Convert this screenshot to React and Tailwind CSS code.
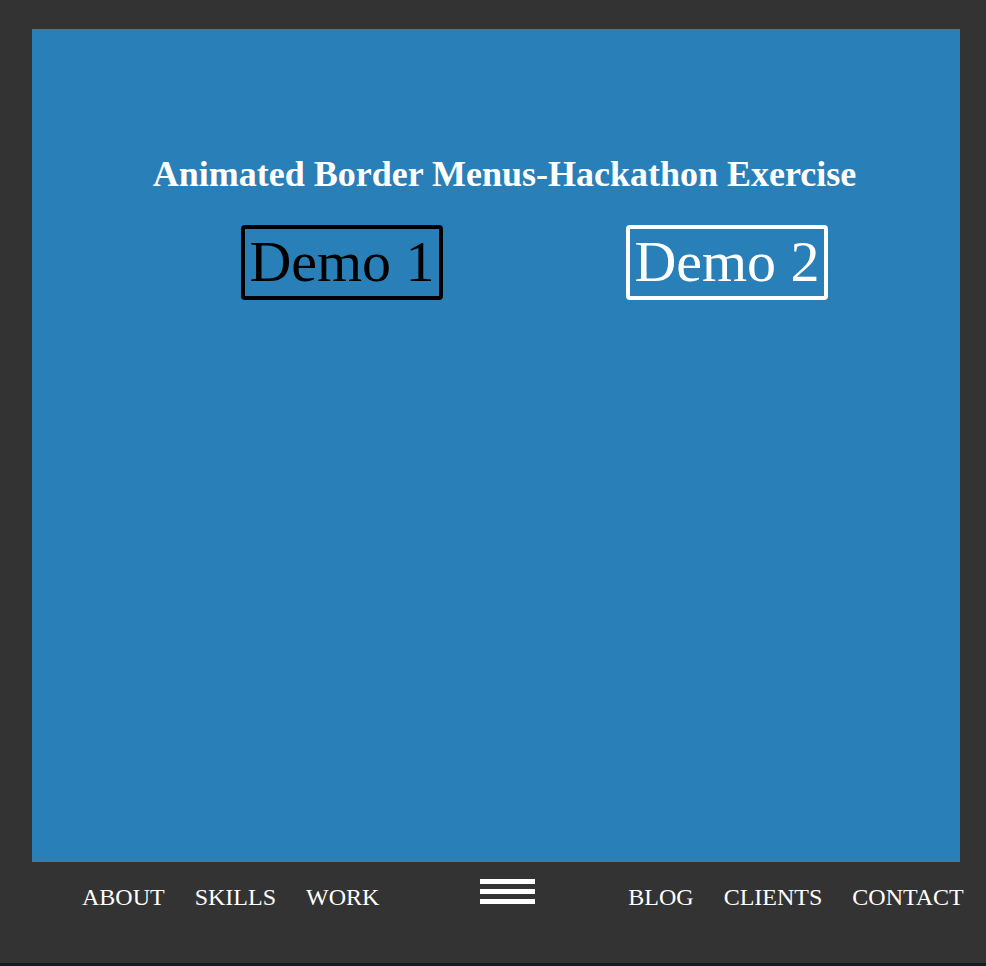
import React from "react";

const leftLinks = ["About", "Skills", "Work"];
const rightLinks = ["Blog", "Clients", "Contact"];

const serif = { fontFamily: '"Liberation Serif", "Times New Roman", serif' };

const DemoButton = ({ label, dark }) => (
  <div
    className={`flex items-center justify-center w-[202px] h-[75px] border-4 rounded-[4px] text-[58px] leading-none ${
      dark ? "border-black text-black" : "border-white text-white"
    }`}
  >
    <span className="-mt-[1px]">{label}</span>
  </div>
);

export default function App() {
  return (
    <div className="w-full h-[966px] bg-[#333333] flex flex-col" style={serif}>
      <div className="ml-[32px] mt-[29px] w-[928px] h-[833px] bg-[#2980b9] flex flex-col items-center">
        <h1 className="mt-[123px] ml-[17px] text-[36px] font-bold text-white leading-[44px] whitespace-nowrap">
          Animated Border Menus-Hackathon Exercise
        </h1>
        <div className="flex mt-[29px] ml-[77px] gap-[183px]">
          <DemoButton label="Demo 1" dark />
          <DemoButton label="Demo 2" />
        </div>
      </div>

      <nav className="flex items-start h-[101px] text-white text-[24px] uppercase">
        <ul className="flex gap-[30px] ml-[82px] mt-[21px] leading-[28px]">
          {leftLinks.map((l) => (
            <li key={l}>{l}</li>
          ))}
        </ul>
        <button className="ml-[101px] mt-[17px] flex flex-col gap-[5px] w-[55px]">
          <span className="block h-[5px] bg-white" />
          <span className="block h-[5px] bg-white" />
          <span className="block h-[5px] bg-white" />
        </button>
        <ul className="flex gap-[30px] ml-[93px] mt-[21px] leading-[28px] whitespace-nowrap">
          {rightLinks.map((l) => (
            <li key={l}>{l}</li>
          ))}
        </ul>
      </nav>
      <div className="h-[3px] bg-[#0e1c2b]" />
    </div>
  );
}
